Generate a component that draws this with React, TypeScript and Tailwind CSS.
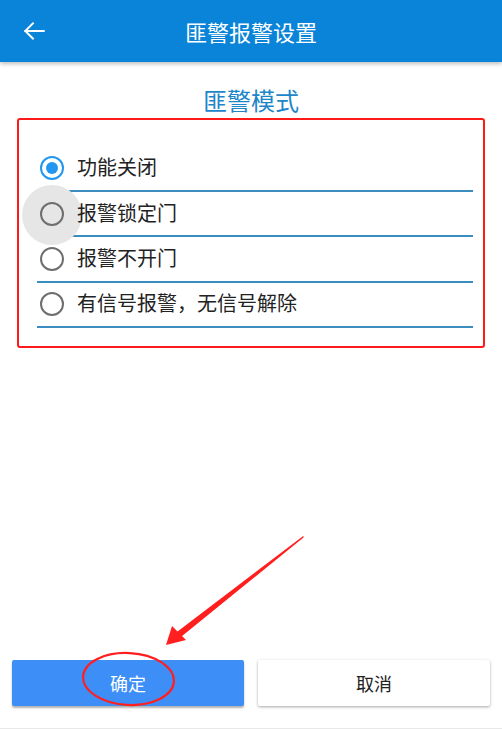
import { useState } from 'react';

const options = ['功能关闭', '报警锁定门', '报警不开门', '有信号报警，无信号解除'];

function Radio({ checked }: { checked: boolean }) {
  return (
    <span
      className={`flex h-[24px] w-[24px] shrink-0 items-center justify-center rounded-full border-[2.5px] ${
        checked ? 'border-[#2196f3]' : 'border-[#6e6e6e]'
      }`}
    >
      {checked && <span className="h-[12px] w-[12px] rounded-full bg-[#2196f3]" />}
    </span>
  );
}

export default function App() {
  const [selected, setSelected] = useState(0);

  return (
    <div
      className="relative flex h-[732px] w-[502px] flex-col overflow-hidden bg-white"
      style={{ fontFamily: '"Noto Sans CJK SC", "Noto Sans", sans-serif' }}
    >
      {/* Top bar */}
      <header className="relative z-10 flex h-[62px] shrink-0 items-center bg-[#0a84d8] shadow-[0_2px_4px_rgba(0,0,0,0.25)]">
        <button className="flex h-[62px] w-[70px] items-center justify-center pr-[2px] text-white">
          <svg width="26" height="26" viewBox="0 0 24 24" fill="none" stroke="currentColor" strokeWidth="1.8" strokeLinecap="square">
            <path d="M21 12H4" />
            <path d="M11 5l-7 7 7 7" />
          </svg>
        </button>
        <h1 className="flex-1 pr-[70px] text-center text-[22px] leading-none text-white">匪警报警设置</h1>
      </header>

      <div className="pt-[20px] text-center text-[24px] leading-[36px] text-[#1c86c8]">匪警模式</div>

      {/* Mode list */}
      <div className="mx-[17px] h-[230px] rounded-[3px] border-[2.5px] border-[#ff1a1a] pl-[18px] pr-[10px] pt-[26.5px]">
        {options.map((label, i) => (
          <div
            key={label}
            onClick={() => setSelected(i)}
            className="relative flex h-[45.4px] items-center gap-[13px] border-b-2 border-[#3b8dc0] pl-[3px]"
          >
            {i === 1 && (
              <span className="absolute left-[-15px] top-[-7px] h-[60px] w-[60px] rounded-full bg-[#e6e6e6]" />
            )}
            <span className="relative">
              <Radio checked={selected === i} />
            </span>
            <span className="relative pb-[2px] text-[20px] leading-none text-[#222]">{label}</span>
          </div>
        ))}
      </div>

      <div className="flex-1" />

      {/* Actions */}
      <div className="flex gap-[14px] px-[12px] pb-[22px]">
        <button className="h-[46px] flex-1 rounded-[2px] bg-[#3e8ef7] text-[18px] text-white shadow-[0_2px_2px_rgba(0,0,0,0.3)]">
          确定
        </button>
        <button className="h-[46px] flex-1 rounded-[2px] bg-white text-[18px] text-[#222] shadow-[0_1px_3px_rgba(0,0,0,0.35)]">
          取消
        </button>
      </div>
      <div className="h-[4px] border-t border-[#e8e8e8]" />

      {/* Annotation */}
      <svg className="pointer-events-none absolute left-0 top-0" width="502" height="732" viewBox="0 0 502 732">
        <path d="M303 537 L178 632 L181 636 Z" fill="#ff1f1f" stroke="#ff1f1f" strokeWidth="1.5" strokeLinejoin="round" />
        <path d="M166 645 L172 626 L186 640 Z" fill="#ff1f1f" />
        <ellipse cx="128.5" cy="679" rx="45.5" ry="26" fill="none" stroke="#ff1f1f" strokeWidth="2.2" transform="rotate(3 128.5 679)" />
      </svg>
    </div>
  );
}
